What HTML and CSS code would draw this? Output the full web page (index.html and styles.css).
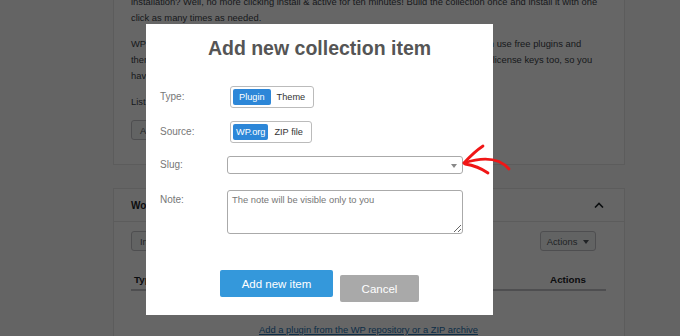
FILE: index.html
```html
<!DOCTYPE html>
<html lang="en">
<head>
    <meta charset="UTF-8">
    <meta name="viewport" content="width=device-width, initial-scale=1.0">
    <title>Collections</title>
    <link rel="stylesheet" href="styles.css">
</head>
<body>
    <div class="page">
        <!-- Intro panel -->
        <div class="panel panel-intro">
            <p>installation? Well, no more clicking install &amp; active for ten minutes! Build the collection once and install it with one<br>click as many times as needed.</p>
            <p>WP Reset keeps collections in the cloud so they are on every site you work on. You can use free plugins and<br>themes from the official WordPress repository, and PRO ones as ZIPs. We'll store your license keys too, so you<br>have everything in one place.</p>
            <p>List of your collections:</p>
            <button class="btn-light">Add new collection</button>
        </div>

        <!-- Collection panel -->
        <div class="panel panel-collection">
            <div class="panel-head">
                <span>WordPress.org favourites</span>
                <svg class="chevron" width="10" height="6" viewBox="0 0 10 6"><path d="M1 5.5 L5 1.5 L9 5.5" fill="none" stroke="#1d2327" stroke-width="1.6"/></svg>
            </div>
            <div class="panel-body">
                <div class="toolbar">
                    <button class="btn-light">Install collection on this site</button>
                    <button class="btn-light btn-actions">Actions <span class="caret"></span></button>
                </div>
                <div class="table-head">
                    <span>Type</span>
                    <span>Actions</span>
                </div>
                <p class="empty">Collection is empty.</p>
                <a href="#" class="add-link">Add a plugin from the WP repository or a ZIP archive</a>
            </div>
        </div>
    </div>

    <div class="overlay"></div>

    <!-- Modal -->
    <div class="modal">
        <h2 class="modal-title">Add new collection item</h2>

        <div class="form-row">
            <label>Type:</label>
            <div class="toggle">
                <span class="active">Plugin</span>
                <span>Theme</span>
            </div>
        </div>

        <div class="form-row">
            <label>Source:</label>
            <div class="toggle">
                <span class="active tight">WP.org</span>
                <span>ZIP file</span>
            </div>
        </div>

        <div class="form-row row-slug">
            <label>Slug:</label>
            <div class="select"></div>
        </div>

        <div class="form-row row-note">
            <label>Note:</label>
            <textarea placeholder="The note will be visible only to you"></textarea>
        </div>

        <div class="modal-actions">
            <button class="btn-primary">Add new item</button>
            <button class="btn-cancel">Cancel</button>
        </div>
    </div>

    <!-- hand drawn arrow pointing at the slug field -->
    <svg class="arrow" width="60" height="40" viewBox="0 0 60 40">
        <path d="M9 23 Q 40 13 54 29" fill="none" stroke="#f01616" stroke-width="2.8" stroke-linecap="round"/>
        <path d="M9 23 Q 19 12 28 6" fill="none" stroke="#f01616" stroke-width="2.8" stroke-linecap="round"/>
        <path d="M10 24 Q 23 26 33 33" fill="none" stroke="#f01616" stroke-width="2.8" stroke-linecap="round"/>
    </svg>
</body>
</html>
```

FILE: styles.css
```css
/* General Styling */
body {
    margin: 0;
    background-color: #fafafa;
    font-family: "Liberation Sans", Arial, sans-serif;
    font-size: 9.4px;
    color: #3c434a;
    overflow: hidden;
}

.page {
    width: 512px;
    margin-left: 113px;
}

.panel {
    background: #fff;
    border: 1px solid #e6e6e6;
    box-sizing: border-box;
}

/* Intro panel */
.panel-intro {
    margin-top: -17px;
    padding: 10px 17px 24px;
}

.panel-intro p {
    margin: 0 0 10px;
    line-height: 16px;
}

.btn-light {
    height: 20px;
    padding: 0 8px;
    font-family: inherit;
    font-size: 9.4px;
    color: #50575e;
    background: #f6f7f7;
    border: 1px solid #c3c4c7;
    border-radius: 3px;
}

.btn-actions {
    padding: 0 6px;
}

/* Collection panel */
.panel-collection {
    margin-top: 23px;
}

.panel-head {
    height: 32px;
    padding: 0 20px 0 17px;
    display: flex;
    align-items: center;
    justify-content: space-between;
    border-bottom: 1px solid #e6e6e6;
    font-size: 10px;
    font-weight: bold;
    color: #1d2327;
}

.panel-body {
    padding: 9px 18px 0 17px;
    text-align: center;
}

.toolbar {
    display: flex;
    justify-content: space-between;
    padding-right: 10px;
}

.caret {
    display: inline-block;
    margin-left: 3px;
    border-left: 3px solid transparent;
    border-right: 3px solid transparent;
    border-top: 4px solid #50575e;
    vertical-align: middle;
}

.table-head {
    margin-top: 19px;
    height: 19px;
    display: flex;
    align-items: center;
    justify-content: space-between;
    padding: 0 20px 0 3px;
    border-bottom: 2px solid #c3c4c7;
    font-weight: bold;
    font-size: 9.8px;
    color: #1d2327;
}

.empty {
    margin: 10px 0 5px;
    line-height: 16px;
}

.add-link {
    line-height: 16px;
    color: #2271b1;
}

/* Modal */
.overlay {
    position: fixed;
    inset: 0;
    background: rgba(0, 0, 0, 0.6);
}

.modal {
    position: fixed;
    left: 146px;
    top: 24px;
    width: 347px;
    box-sizing: border-box;
    padding: 12px 14px 13px;
    background: #fff;
}

.modal-title {
    margin: 0 0 26px;
    text-align: center;
    font-size: 19.5px;
    line-height: 24px;
    color: #555;
}

.form-row {
    display: flex;
    align-items: center;
    margin-bottom: 13px;
}

.form-row label {
    width: 67px;
    flex-shrink: 0;
    font-size: 10px;
    line-height: 12px;
    color: #777;
}

.toggle {
    margin-left: 3px;
    display: flex;
    padding: 2px;
    border: 1px solid #bbb;
    border-radius: 3px;
}

.toggle span {
    padding: 0 6px;
    line-height: 16px;
    font-size: 9.2px;
    color: #333;
    border-radius: 2px;
}

.toggle .active {
    background: #2d87d8;
    color: #fff;
}

.toggle .tight {
    padding: 0 3px;
}

.select {
    position: relative;
    width: 236px;
    height: 18px;
    box-sizing: border-box;
    border: 1px solid #aaa;
    border-radius: 3px;
}

.select::after {
    content: "";
    position: absolute;
    right: 5px;
    top: 7px;
    border-left: 3px solid transparent;
    border-right: 3px solid transparent;
    border-top: 4px solid #888;
}

.row-slug {
    margin-bottom: 16px;
}

.row-note {
    align-items: flex-start;
    margin-bottom: 0;
}

.row-note label {
    padding-top: 4px;
}

textarea {
    width: 236px;
    height: 44px;
    box-sizing: border-box;
    padding: 3px 4px;
    border: 1px solid #aaa;
    border-radius: 3px;
    font-family: inherit;
    font-size: 9.4px;
}

textarea::placeholder {
    color: #777;
}

.modal-actions {
    margin-top: 36px;
    display: flex;
    justify-content: center;
    align-items: flex-start;
    gap: 7px;
}

.btn-primary, .btn-cancel {
    height: 27px;
    border: none;
    border-radius: 2px;
    color: #fff;
    font-family: inherit;
    font-size: 11.5px;
}

.btn-primary {
    width: 113px;
    background: #3498db;
}

.btn-cancel {
    width: 79px;
    margin-top: 5px;
    background: #a9a9a9;
}

.arrow {
    position: fixed;
    left: 455px;
    top: 140px;
}
```
